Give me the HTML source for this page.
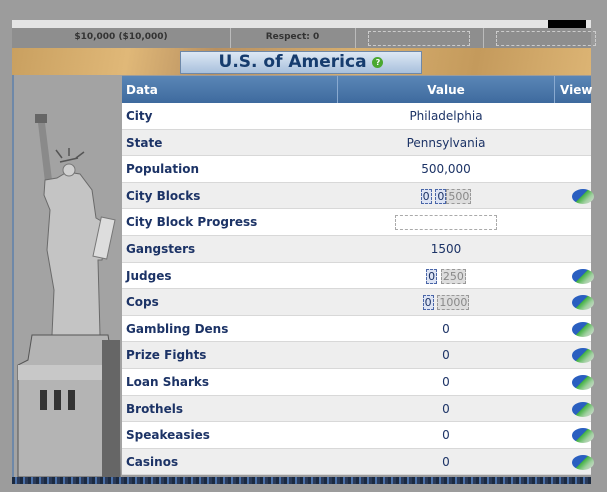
<!DOCTYPE html>
<html><head><meta charset="utf-8"><style>
*{margin:0;padding:0;box-sizing:border-box}
body{width:607px;height:492px;overflow:hidden;background:#9c9c9c;font-family:"DejaVu Sans","Liberation Sans",sans-serif;position:relative}
.abs{position:absolute}
.row{position:absolute;left:122px;width:469px;height:26.6px;border-bottom:1px solid #d8d8d8;font-size:12px;color:#1c3366}
.row .l{position:absolute;left:4px;top:6px;font-weight:bold}
.row .v{position:absolute;left:216px;width:216px;text-align:center;top:6px}
.ico{position:absolute;left:450px;top:6px;width:22px;height:15px;border-radius:50%;background:linear-gradient(135deg,#2a5fc0 0%,#2a5fc0 45%,#40b040 46%,#a0d0a0 70%,#ddd 100%)}
.box{display:inline-block;border:1px dashed #4a66a8;background:#dde4f4;padding:0 1px;font-size:11px;line-height:13px}
.gbox{display:inline-block;border:1px dashed #999;background:#ddd;color:#888;padding:0 1px;font-size:11px;line-height:13px}
</style></head><body>
<div class="abs" style="left:12px;top:20px;width:579px;height:8px;background:#e4e4e4"></div>
<div class="abs" style="left:548px;top:20px;width:38px;height:8px;background:#000"></div>
<div class="abs" style="left:12px;top:28px;width:579px;height:20px;background:#8e8e8e;font-size:9px;font-weight:bold;color:#333">
<div class="abs" style="left:0;width:218px;top:4px;text-align:center">$10,000 ($10,000)</div>
<div class="abs" style="left:218px;top:0;height:20px;border-left:1px solid #bbb"></div>
<div class="abs" style="left:218px;width:125px;top:4px;text-align:center">Respect: 0</div>
<div class="abs" style="left:343px;top:0;height:20px;border-left:1px solid #bbb"></div>
<div class="abs" style="left:356px;top:3px;width:102px;height:15px;border:1px dashed #ccc"></div>
<div class="abs" style="left:471px;top:0;height:20px;border-left:1px solid #bbb"></div>
<div class="abs" style="left:484px;top:3px;width:100px;height:15px;border:1px dashed #ccc"></div>
</div>
<div class="abs" style="left:12px;top:48px;width:579px;height:27px;background:linear-gradient(100deg,#c9a060,#e0b878 20%,#b89060 35%,#d8b070 60%,#c49a5c 80%,#dcb474)"></div>
<div class="abs" style="left:180px;top:51px;width:242px;height:23px;background:linear-gradient(#dde8f4,#a8c0dc);border:1px solid #6e88a8;color:#163c6e;font-weight:bold;font-size:17px;text-align:center;line-height:21px">U.S. of America <span style="display:inline-block;width:11px;height:11px;border-radius:50%;background:#4aa830;color:#fff;font-size:8px;line-height:11px;vertical-align:2px">?</span></div>
<div class="abs" style="left:12px;top:75px;width:110px;height:402px;background:#a3a3a3;border-left:2px solid #6e88a8"></div>
<svg class="abs" style="left:12px;top:100px" width="110" height="377">
<rect x="23" y="14" width="12" height="9" fill="#666"/><path d="M26 23 L33 23 L40 80 L33 82 Z" fill="#8a8a8a"/>
<path d="M33 80 L45 78 L55 72 L68 74 L80 90 L84 118 L96 125 L90 160 L86 160 L88 235 L40 235 L42 190 L35 150 L38 110 L32 95 Z" fill="#c4c4c4" stroke="#6a6a6a"/>
<circle cx="57" cy="70" r="6" fill="#d0d0d0" stroke="#777"/>
<path d="M48 62 L66 58 M57 56 L57 48 M50 58 L44 50 M64 58 L72 52" stroke="#555" stroke-width="1.5"/>
<rect x="85" y="118" width="14" height="40" fill="#ddd" stroke="#777" transform="rotate(12 92 138)"/>
<path d="M20 235 L96 235 L100 260 L106 265 L108 377 L6 377 L6 265 L16 260 Z" fill="#b4b4b4" stroke="#555"/>
<rect x="6" y="265" width="102" height="15" fill="#c8c8c8"/>
<rect x="28" y="290" width="7" height="20" fill="#333"/><rect x="42" y="290" width="7" height="20" fill="#333"/><rect x="56" y="290" width="7" height="20" fill="#333"/>
<rect x="90" y="240" width="18" height="137" fill="#666"/>
</svg>
<div class="abs" style="left:122px;top:76px;width:469px;height:27px;background:linear-gradient(#5a86b6,#3e6a9e);color:#fff;font-size:12px;font-weight:bold">
<div class="abs" style="left:4px;top:7px">Data</div>
<div class="abs" style="left:215px;top:0;height:27px;border-left:1px solid #8aaad0"></div>
<div class="abs" style="left:216px;width:216px;top:7px;text-align:center">Value</div>
<div class="abs" style="left:432px;top:0;height:27px;border-left:1px solid #8aaad0"></div>
<div class="abs" style="left:438px;top:7px">View</div>
</div>
<div class="row" style="top:103px;background:#fff"><span class="l">City</span><span class="v">Philadelphia</span></div>
<div class="row" style="top:129.6px;background:#eee"><span class="l">State</span><span class="v">Pennsylvania</span></div>
<div class="row" style="top:156.2px;background:#fff"><span class="l">Population</span><span class="v">500,000</span></div>
<div class="row" style="top:182.8px;background:#eee"><span class="l">City Blocks</span><span class="v"><span class="box">0</span> <span class="box">0</span><span class="gbox">500</span></span><span class="ico"></span></div>
<div class="row" style="top:209.4px;background:#fff"><span class="l">City Block Progress</span><span class="v"><span style="display:inline-block;width:102px;height:15px;border:1px dashed #aaa;vertical-align:-3px"></span></span></div>
<div class="row" style="top:236px;background:#eee"><span class="l">Gangsters</span><span class="v">1500</span></div>
<div class="row" style="top:262.6px;background:#fff"><span class="l">Judges</span><span class="v"><span class="box">0</span> <span class="gbox">250</span></span><span class="ico"></span></div>
<div class="row" style="top:289.2px;background:#eee"><span class="l">Cops</span><span class="v"><span class="box">0</span> <span class="gbox">1000</span></span><span class="ico"></span></div>
<div class="row" style="top:315.8px;background:#fff"><span class="l">Gambling Dens</span><span class="v">0</span><span class="ico"></span></div>
<div class="row" style="top:342.4px;background:#eee"><span class="l">Prize Fights</span><span class="v">0</span><span class="ico"></span></div>
<div class="row" style="top:369px;background:#fff"><span class="l">Loan Sharks</span><span class="v">0</span><span class="ico"></span></div>
<div class="row" style="top:395.6px;background:#eee"><span class="l">Brothels</span><span class="v">0</span><span class="ico"></span></div>
<div class="row" style="top:422.2px;background:#fff"><span class="l">Speakeasies</span><span class="v">0</span><span class="ico"></span></div>
<div class="row" style="top:448.8px;background:#eee"><span class="l">Casinos</span><span class="v">0</span><span class="ico"></span></div>
<div class="abs" style="left:12px;top:477px;width:579px;height:7px;background:repeating-linear-gradient(90deg,#1c2a40 0 3px,#4a70a8 3px 5px,#2a3a58 5px 8px)"></div>
</body></html>
